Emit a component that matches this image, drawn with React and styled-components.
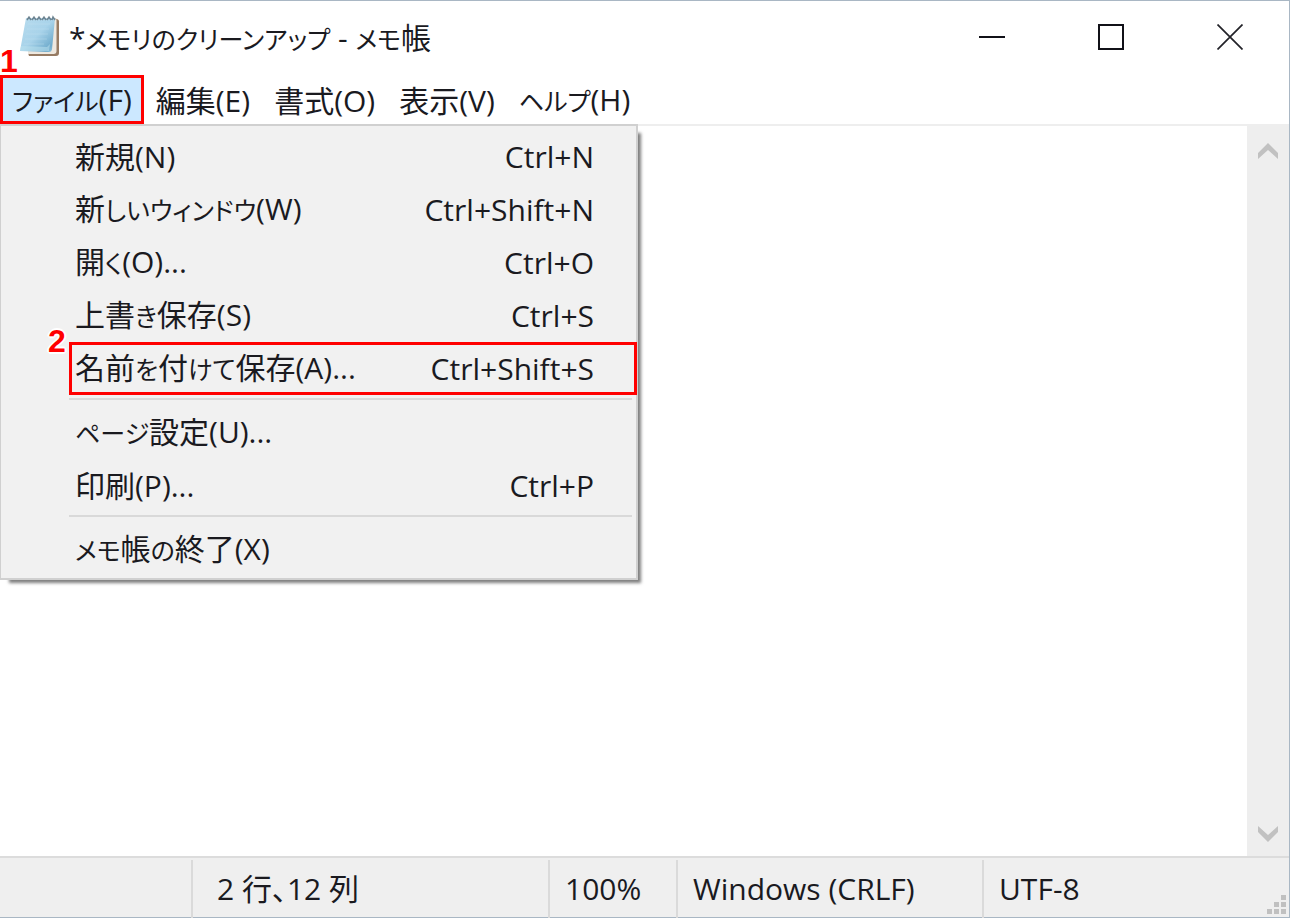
import React from 'react'
import styled, { createGlobalStyle } from 'styled-components'

const GlobalStyle = createGlobalStyle`
    * {
        box-sizing: border-box;
    }
    body {
        margin: 0;
        background-color: #ffffff;
    }
    body, button, textarea {
        font-family: "Open Sans", "Noto Sans CJK JP", sans-serif;
        font-size: 30px;
        font-feature-settings: "palt";
        color: #1a1a1f;
    }
    button {
        margin: 0;
        padding: 0;
        border: none;
        background: none;
        line-height: 40px;
        white-space: nowrap;
    }
`

const Window = styled.div`
    display: flex;
    flex-direction: column;
    min-height: 100vh;
    border: 1px solid #a9b7c4;
    border-left: none;
`

const TitleBar = styled.header`
    display: flex;
    align-items: center;
    height: 74px;
    padding-left: 18px;
`

const Title = styled.h1`
    flex: 1;
    margin: 0;
    padding-left: 8px;
    font-size: 30px;
    font-weight: 400;
    line-height: 40px;
    white-space: nowrap;
`

// kana sit a little smaller than the kanji next to them
const Kana = styled.span`
    font-size: 25px;
`

const WindowButton = styled.button`
    display: flex;
    justify-content: center;
    align-items: center;
    align-self: flex-start;
    width: 119px;
    height: 72px;
`

const MenuBar = styled.nav`
    display: flex;
    height: 51px;
    border-bottom: 2px solid #eeeeee;
`

const MenuSlot = styled.div`
    position: relative;
    display: flex;
`

const MenuButton = styled.button`
    padding: 2px 12px 0;
    background-color: ${props => props.$open ? '#cce8ff' : 'transparent'};
`

const Dropdown = styled.div`
    position: absolute;
    z-index: 1;
    top: 49px;
    left: 0;
    width: 638px;
    padding: 4px 4px 2px 68px;
    background-color: #f1f1f1;
    border: 2px solid #d0d0d0;
    border-left-width: 1px;
    box-shadow: 6px 6px 3px -3px rgba(0, 0, 0, 0.5);
`

const ItemRow = styled.div`
    position: relative;
`

const MenuItem = styled.button`
    display: flex;
    justify-content: space-between;
    align-items: center;
    width: 100%;
    height: 53px;
    padding: 0 38px 0 6px;
`

const Separator = styled.hr`
    height: 2px;
    margin: 3px 0 6px;
    border: none;
    background-color: #d9d9d9;
`

const Frame = styled.div`
    position: absolute;
    top: 0;
    right: ${props => props.$wide ? '-5px' : '0'};
    bottom: 0;
    left: 0;
    border: 3px solid #ff0000;
    pointer-events: none;
`

const Step = styled.span`
    position: absolute;
    top: ${props => props.$top}px;
    left: ${props => props.$left}px;
    font-family: "Liberation Sans", sans-serif;
    font-size: 32px;
    font-weight: 700;
    line-height: 32px;
    color: #ff0000;
    text-shadow: 2px 0 #fff, -2px 0 #fff, 0 2px #fff, 0 -2px #fff,
        1px 1px #fff, -1px 1px #fff, 1px -1px #fff, -1px -1px #fff;
`

const Editor = styled.main`
    display: flex;
    flex: 1;
`

const TextArea = styled.textarea`
    flex: 1;
    padding: 8px;
    border: none;
    outline: none;
    resize: none;
`

const ScrollBar = styled.div`
    display: flex;
    flex-direction: column;
    justify-content: space-between;
    width: 42px;
    padding-top: 3px;
    background-color: #eeeeee;
`

const ScrollButton = styled.button`
    display: flex;
    justify-content: center;
    align-items: center;
    height: 44px;
`

const StatusBar = styled.footer`
    position: relative;
    display: grid;
    grid-template-columns: 1fr 357px 128px 306px 307px;
    height: 61px;
    padding-top: 2px;
    border-top: 2px solid #dcdcdc;
    background-color: #efefef;
`

const StatusCell = styled.div`
    padding-left: ${props => props.$indent || 15}px;
    border-left: ${props => props.$first ? 'none' : '2px solid #dadada'};
    line-height: 58px;
    white-space: nowrap;
`

const Grip = styled.svg`
    position: absolute;
    right: 2px;
    bottom: 2px;
`

const Label = ({ text }) => (
    <span>
        {text.split(/([\u3041-\u30ff]+)/).map((part, i) => i % 2 ? <Kana key={i}>{part}</Kana> : part)}
    </span>
)

const NotepadIcon = () => (
    <svg width="43" height="46" viewBox="0 2 43 46" aria-hidden="true">
        <defs>
            <linearGradient id="page" x1="0" y1="0" x2="1" y2="1">
                <stop offset="0" stopColor="#b9dcee" />
                <stop offset="0.5" stopColor="#a8d3ea" />
                <stop offset="0.85" stopColor="#6fabcc" />
                <stop offset="1" stopColor="#9ccde4" />
            </linearGradient>
        </defs>
        <path d="M36 5l4 1.500q1 .5 1 2V40q0 3-3 3H11l-1-3z" fill="#967b63" />
        <path d="M36 5l2.500 1.500V38q0 3-3 3H10v-3z" fill="#eee8df" />
        <path d="M8 5h29L34 36.500q-.5 3-4 2.500L2 38z" fill="url(#page)" />
        <path d="M10 11h22M9 16h22M8 21h22M7 26h22M6 31h20" stroke="#c9e5f2" opacity="0.35" />
        <path d="M2 38l1-5 26 1 3-3-1 7z" fill="#bce1ef" opacity="0.55" />
        <path d="M9 7l2-3 2 3M14 7l2-3 2 3M19 7l2-3 2 3M24 7l2-3 2 3M29 7l2-3 2 3M34 7l1-3 2 3" fill="none" stroke="#6f8592" strokeWidth="1.500" />
    </svg>
)

const Chevron = ({ down }) => (
    <svg width="20" height="16" viewBox="0 0 20 16" aria-hidden="true">
        <path d={down ? 'M0 0l10 9 10-9v6L10 16 0 6z' : 'M0 16l10-9 10 9v-6L10 0 0 10z'} fill="#c1c1c1" />
    </svg>
)

const fileMenu = [
    { label: '新規(N)', keys: 'Ctrl+N' },
    { label: '新しいウィンドウ(W)', keys: 'Ctrl+Shift+N' },
    { label: '開く(O)...', keys: 'Ctrl+O' },
    { label: '上書き保存(S)', keys: 'Ctrl+S' },
    { label: '名前を付けて保存(A)...', keys: 'Ctrl+Shift+S', step: '2' },
    { separator: true },
    { label: 'ページ設定(U)...' },
    { label: '印刷(P)...', keys: 'Ctrl+P' },
    { separator: true },
    { label: 'メモ帳の終了(X)' },
]

const App = () => {
    return (
        <>
            <GlobalStyle />
            <Window>
                <TitleBar>
                    <NotepadIcon />
                    <Title><Label text="*メモリのクリーンアップ - メモ帳" /></Title>
                    <WindowButton aria-label="最小化">
                        <svg width="26" height="26" viewBox="0 0 26 26"><path d="M0 13h26" stroke="#111118" strokeWidth="2" /></svg>
                    </WindowButton>
                    <WindowButton aria-label="最大化">
                        <svg width="26" height="26" viewBox="0 0 26 26"><path d="M1 1h24v24H1z" fill="none" stroke="#111118" strokeWidth="2" /></svg>
                    </WindowButton>
                    <WindowButton aria-label="閉じる">
                        <svg width="26" height="26" viewBox="0 0 26 26"><path d="M.5.5l25 25M25.500.5l-25 25" stroke="#222228" strokeWidth="1.700" /></svg>
                    </WindowButton>
                </TitleBar>
                <MenuBar>
                    <MenuSlot>
                        <MenuButton $open aria-expanded="true"><Label text="ファイル(F)" /></MenuButton>
                        <Frame />
                        <Step $top={-30} $left={0}>1</Step>
                        <Dropdown>
                            {fileMenu.map((item, i) => item.separator ? <Separator key={i} /> : (
                                <ItemRow key={i}>
                                    <MenuItem>
                                        <Label text={item.label} />
                                        <span>{item.keys}</span>
                                    </MenuItem>
                                    {item.step && <Frame $wide />}
                                    {item.step && <Step $top={-17} $left={-21}>{item.step}</Step>}
                                </ItemRow>
                            ))}
                        </Dropdown>
                    </MenuSlot>
                    <MenuButton><Label text="編集(E)" /></MenuButton>
                    <MenuButton><Label text="書式(O)" /></MenuButton>
                    <MenuButton><Label text="表示(V)" /></MenuButton>
                    <MenuButton><Label text="ヘルプ(H)" /></MenuButton>
                </MenuBar>
                <Editor>
                    <TextArea aria-label="テキスト エディター" />
                    <ScrollBar>
                        <ScrollButton aria-label="上へスクロール"><Chevron /></ScrollButton>
                        <ScrollButton aria-label="下へスクロール"><Chevron down /></ScrollButton>
                    </ScrollBar>
                </Editor>
                <StatusBar>
                    <StatusCell $first />
                    <StatusCell $indent={24}>2 行、12 列</StatusCell>
                    <StatusCell>100%</StatusCell>
                    <StatusCell>Windows (CRLF)</StatusCell>
                    <StatusCell>UTF-8</StatusCell>
                    <Grip width="20" height="20" viewBox="0 0 20 20" aria-hidden="true">
                        <path d="M14 0h5v5h-5zM7 7h5v5H7zM14 7h5v5h-5zM0 14h5v5H0zM7 14h5v5H7zM14 14h5v5h-5z" fill="#c0c0c0" />
                    </Grip>
                </StatusBar>
            </Window>
        </>
    )
}

export default App
